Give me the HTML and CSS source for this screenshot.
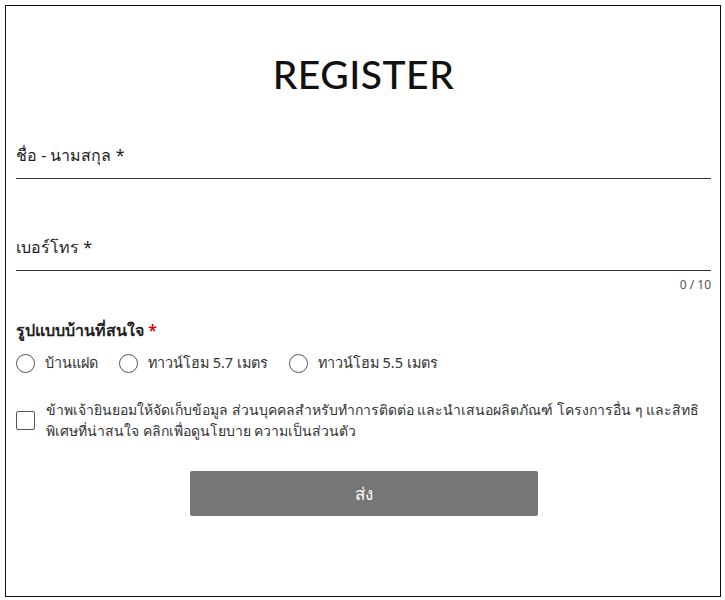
FILE: index.html
```html
<!DOCTYPE html>
<html lang="th">
<head>
<meta charset="utf-8">
<title>Register</title>
<link rel="stylesheet" href="styles.css">
</head>
<body>
<div class="frame">
  <h1 class="title">REGISTER</h1>
  <form class="form">
    <div class="field">
      <div class="field-label">ชื่อ - นามสกุล *</div>
      <div class="field-line"></div>
    </div>
    <div class="field field-phone">
      <div class="field-label">เบอร์โทร *</div>
      <div class="field-line"></div>
      <div class="counter">0 / 10</div>
    </div>
    <div class="group">
      <div class="group-label">รูปแบบบ้านที่สนใจ <span class="req">*</span></div>
      <div class="radios">
        <label class="radio"><span class="circle"></span>บ้านแฝด</label>
        <label class="radio"><span class="circle"></span>ทาวน์โฮม 5.7 เมตร</label>
        <label class="radio"><span class="circle"></span>ทาวน์โฮม 5.5 เมตร</label>
      </div>
    </div>
    <label class="consent">
      <span class="box"></span>
      <span class="consent-text">ข้าพเจ้ายินยอมให้จัดเก็บข้อมูล ส่วนบุคคลสำหรับทำการติดต่อ และนำเสนอผลิตภัณฑ์ โครงการอื่น ๆ และสิทธิ<wbr>พิเศษที่น่าสนใจ คลิกเพื่อดูนโยบาย ความเป็นส่วนตัว</span>
    </label>
    <div class="actions">
      <button type="button" class="submit">ส่ง</button>
    </div>
  </form>
</div>
</body>
</html>
```

FILE: styles.css
```css
* { box-sizing: border-box; }
html, body { margin: 0; padding: 0; background: #fff; }
body {
  font-family: "Noto Sans", "Open Sans", "DejaVu Sans", sans-serif;
  color: #222;
}
.frame {
  margin: 5px 0 0 5px;
  width: 716px;
  height: 592px;
  border: 1.5px solid #111;
  padding: 0 9px 0 10px;
}
.title {
  margin: 40px 0 0;
  height: 56px;
  font-family: "Lato", "Inter", sans-serif;
  font-weight: 500;
  font-size: 39px;
  line-height: 56px;
  letter-spacing: 0.5px;
  text-align: center;
  color: #111;
}
.form { display: flex; flex-direction: column; }
.field { position: relative; margin-top: 41px; }
.field-phone { margin-top: 56px; }
.field-label {
  font-size: 16px;
  line-height: 24px;
  color: #222;
  padding-bottom: 11px;
}
.field-line { height: 1px; background: #333; }
.counter {
  text-align: right;
  font-size: 12px;
  line-height: 16px;
  color: #555;
  margin-top: 6px;
}
.group { margin-top: 25px; }
.group-label {
  font-size: 16px;
  font-weight: 600;
  line-height: 24px;
  color: #222;
}
.req { color: #d0021b; font-weight: 600; }
.radios { display: flex; gap: 21px; margin-top: 10px; }
.radio {
  display: flex;
  align-items: center;
  gap: 10px;
  font-size: 14.4px;
  line-height: 22px;
  color: #333;
}
.circle {
  width: 19px;
  height: 19px;
  border: 1.5px solid #555;
  border-radius: 50%;
}
.consent {
  display: flex;
  align-items: center;
  gap: 11px;
  margin-top: 25px;
}
.box {
  flex: none;
  width: 19px;
  height: 19px;
  border: 1.5px solid #555;
  border-radius: 2px;
}
.consent-text {
  font-size: 14px;
  line-height: 21px;
  color: #333;
}
.actions { display: flex; justify-content: center; margin-top: 30px; }
.submit {
  width: 348px;
  height: 45px;
  border: none;
  border-radius: 2px;
  background: #767676;
  color: #fff;
  font-family: "Noto Sans", "Open Sans", sans-serif;
  font-size: 17px;
}
```
